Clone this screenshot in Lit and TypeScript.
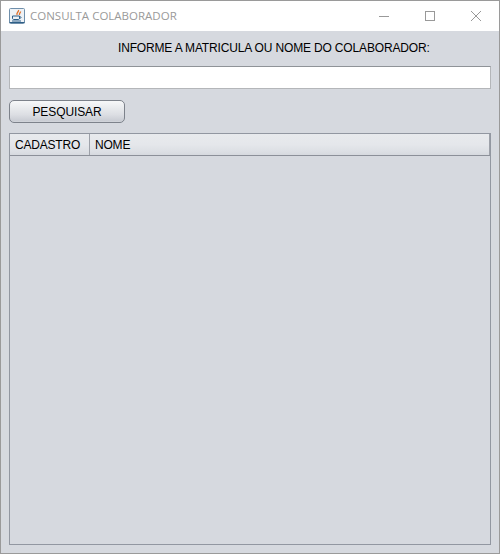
import { LitElement, html, css } from "lit";
import { customElement } from "lit/decorators.js";

@customElement("app-root")
export class AppRoot extends LitElement {
  static styles = css`
    :host {
      display: block;
      width: 500px;
      height: 554px;
      box-sizing: border-box;
      padding: 1px;
      background: #9a9a9a;
      font-family: "Liberation Sans", Arial, sans-serif;
      overflow: hidden;
    }
    .window {
      height: 100%;
      display: flex;
      flex-direction: column;
      background: #d6d9df;
    }
    .titlebar {
      height: 30px;
      flex: none;
      background: #fff;
      display: flex;
      align-items: center;
      padding-left: 8px;
      padding-bottom: 1px;
      box-sizing: border-box;
      color: #9a9a9a;
    }
    .app-icon {
      width: 16px;
      height: 16px;
      margin-right: 5px;
      flex: none;
    }
    .title {
      flex: 1;
      font-family: "Open Sans", "Liberation Sans", sans-serif;
      font-size: 11.5px;
    }
    .ctl {
      width: 46px;
      height: 29px;
      display: flex;
      align-items: center;
      justify-content: center;
      flex: none;
    }
    .content {
      flex: 1;
      min-height: 0;
      display: flex;
      flex-direction: column;
      padding: 9px 8px 8px 8px;
    }
    .label {
      height: 16px;
      line-height: 16px;
      font-size: 12px;
      letter-spacing: -0.16px;
      color: #000;
      padding-left: 109px;
      white-space: nowrap;
    }
    .input {
      margin-top: 10px;
      height: 23px;
      box-sizing: border-box;
      background: #fff;
      border: 1px solid #b4b6b9;
      border-top: 1px solid #8f9398;
      flex: none;
    }
    .button {
      margin-top: 11px;
      width: 116px;
      height: 23px;
      box-sizing: border-box;
      flex: none;
      border: 1px solid #7d828b;
      border-radius: 5px;
      background: linear-gradient(#f7f8f9 0%, #e8eaed 35%, #dcdee3 65%, #c9ccd3 95%, #d6d9df 100%);
      display: flex;
      align-items: center;
      justify-content: center;
      font-size: 12px;
      letter-spacing: -0.1px;
      color: #000;
    }
    .table {
      margin-top: 10px;
      flex: 1;
      min-height: 0;
      box-sizing: border-box;
      border: 1px solid #9297a1;
      display: flex;
      flex-direction: column;
    }
    .thead {
      height: 22px;
      flex: none;
      display: flex;
      box-sizing: border-box;
      border-bottom: 1px solid #8c9099;
      background: linear-gradient(#e8eaed 0%, #e5e7eb 50%, #dcdfe4 85%, #d6d9df 100%);
      font-size: 12px;
      letter-spacing: -0.2px;
      color: #000;
    }
    .th {
      display: flex;
      align-items: center;
      padding-left: 5px;
      box-sizing: border-box;
    }
    .th.cadastro {
      width: 80px;
      border-right: 1px solid #9da1a9;
    }
    .th.nome {
      flex: 1;
      border-right: 1px solid #9da1a9;
    }
  `;

  render() {
    return html`
      <div class="window">
        <div class="titlebar">
          <svg class="app-icon" viewBox="0 0 16 16">
            <rect x="0.5" y="0.5" width="15" height="15" rx="1" fill="#eef2f6" stroke="#6f8fab" />
            <path d="M0.5 14.5h15" stroke="#2f5f86" />
            <path d="M9.5 2c.8 1.6-2.6 2.6-1.4 5M11.5 3.5c.3 1.2-1.6 1.8-1 3.4" fill="none" stroke="#e0702a" stroke-width="1.3" />
            <path d="M3.5 8h7v2.5c0 .8-.7 1-1.2 1H5c-.8 0-1.5-.4-1.5-1zM10.5 8.5c2 0 2 2-.2 2" fill="none" stroke="#2c5f8a" stroke-width="1" />
            <path d="M3 13h9" stroke="#2c5f8a" />
          </svg>
          <span class="title">CONSULTA COLABORADOR</span>
          <span class="ctl">
            <svg width="10" height="10" viewBox="0 0 10 10"><path d="M0 5.5h10" stroke="#999" fill="none" /></svg>
          </span>
          <span class="ctl">
            <svg width="10" height="10" viewBox="0 0 10 10"><rect x="0.5" y="0.5" width="9" height="9" stroke="#999" fill="none" /></svg>
          </span>
          <span class="ctl">
            <svg width="10" height="10" viewBox="0 0 10 10"><path d="M0 0l10 10M10 0L0 10" stroke="#999" fill="none" /></svg>
          </span>
        </div>
        <div class="content">
          <div class="label">INFORME A MATRICULA OU NOME DO COLABORADOR:</div>
          <div class="input"></div>
          <div class="button">PESQUISAR</div>
          <div class="table">
            <div class="thead">
              <div class="th cadastro">CADASTRO</div>
              <div class="th nome">NOME</div>
            </div>
          </div>
        </div>
      </div>
    `;
  }
}
